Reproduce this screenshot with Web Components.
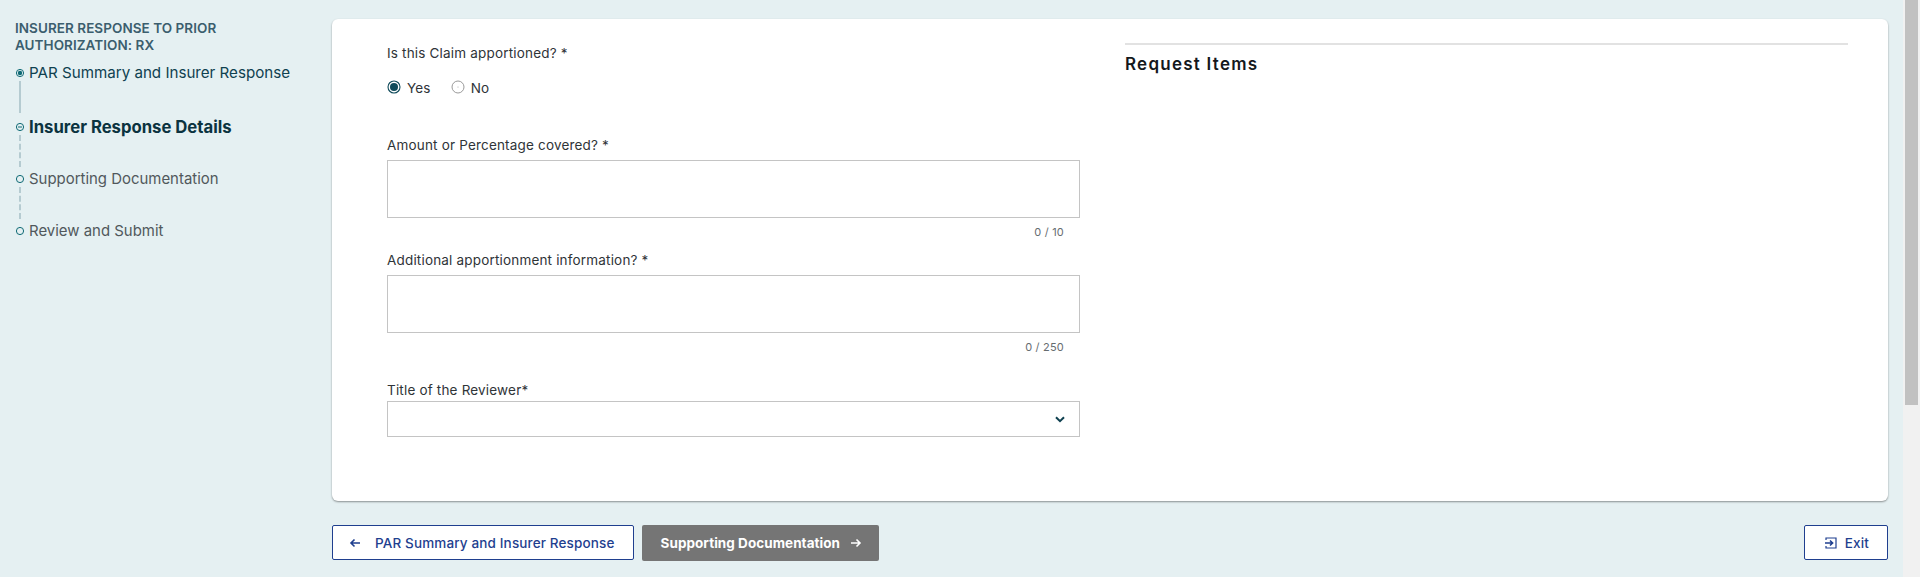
<!DOCTYPE html>
<html lang="en">
<head>
<meta charset="utf-8">
<title>Insurer Response Details</title>
<style>
    html, body { margin: 0; height: 577px; overflow: hidden; background: #e5f0f2; }
    body { font-family: "Inter", "Liberation Sans", sans-serif; }
</style>
</head>
<body>
<par-page>
    <step-nav slot="nav"></step-nav>
    <form-card slot="card"></form-card>
    <nav-actions slot="actions"></nav-actions>
</par-page>

<script>
// shared text style for field labels
const LABEL_CSS = `font: 400 13.5px/18px "Inter", "Liberation Sans", sans-serif; letter-spacing: .18px; color: #2f3438;`;

class ParPage extends HTMLElement {
    constructor() {
        super();
        this.attachShadow({ mode: 'open' });
        this.shadowRoot.innerHTML = `
            <style>
                :host { display: grid; grid-template-columns: 332px 1fr 17px; height: 577px; }
                .main { padding: 19px 15px 0 0; display: flex; flex-direction: column; gap: 24px; }
                .track { background: #f1f1f1; padding-left: 2px; }
                .thumb { height: 405px; background: #c1c1c1; margin-right: 2px; }
            </style>
            <div><slot name="nav"></slot></div>
            <div class="main">
                <slot name="card"></slot>
                <slot name="actions"></slot>
            </div>
            <div class="track"><div class="thumb"></div></div>
        `;
    }
}
customElements.define('par-page', ParPage);

class StepNav extends HTMLElement {
    constructor() {
        super();
        this.attachShadow({ mode: 'open' });
        this.steps = [
            { label: 'PAR Summary and Insurer Response', state: 'done' },
            { label: 'Insurer Response Details', state: 'current' },
            { label: 'Supporting Documentation', state: 'todo' },
            { label: 'Review and Submit', state: 'todo' }
        ];
    }

    connectedCallback() {
        this.shadowRoot.innerHTML = `
            <style>
                :host { display: block; padding: 20px 0 0 15px; font-family: "Inter", "Liberation Sans", sans-serif; }
                h2 { margin: 0 0 9px; font-size: 13.5px; line-height: 16.5px; font-weight: 600; letter-spacing: .05px; color: #3b5e6e; width: 262px; text-transform: uppercase; }
                ol { list-style: none; margin: 0; padding: 0; }
                li { display: flex; align-items: flex-start; gap: 4px; height: 52px; position: relative; font-size: 14.95px; line-height: 22px; color: #51585c; }
                li.done { color: #0f4150; font-size: 15.15px; height: 54px; }
                li.current { color: #0b3340; font-weight: 700; font-size: 16.7px; }
                svg { flex: none; margin-top: 6px; }
                li:not(:last-child)::after {
                    content: ""; position: absolute; left: 4px; top: 19px; height: 32px;
                    border-left: 2px dashed #b5cbd1;
                }
                li.done::after { border-left-style: solid !important; }
            </style>
            <h2>Insurer Response to Prior Authorization: RX</h2>
            <ol>
                ${this.steps.map(s => `
                    <li class="${s.state}">
                        <svg width="10" height="10" viewBox="0 0 10 10">
                            <circle cx="5" cy="5" r="3.6" fill="none" stroke="#0f6a75" stroke-width="1"/>
                            ${s.state === 'done' ? '<circle cx="5" cy="5" r="2.2" fill="#0f6a75"/>' : ''}
                            ${s.state === 'current' ? '<path d="M3 5h4" stroke="#0f6a75" stroke-width="1"/>' : ''}
                        </svg>
                        <span>${s.label}</span>
                    </li>
                `).join('')}
            </ol>
        `;
    }
}
customElements.define('step-nav', StepNav);

class TextField extends HTMLElement {
    constructor() {
        super();
        this.attachShadow({ mode: 'open' });
    }

    connectedCallback() {
        this.shadowRoot.innerHTML = `
            <style>
                :host { display: block; width: 693px; }
                label { display: block; ${LABEL_CSS} margin-bottom: 6px; }
                .box { height: 56px; border: 1px solid #c4c4c4; background: #fff; }
                .count { text-align: right; padding: 7px 16px 0 0; font: 400 11px/14px "Inter", "Liberation Sans", sans-serif; letter-spacing: .2px; color: #666c70; }
            </style>
            <label>${this.getAttribute('label')}</label>
            <div class="box"></div>
            <div class="count">${this.getAttribute('count')}</div>
        `;
    }
}
customElements.define('text-field', TextField);

class SelectField extends HTMLElement {
    constructor() {
        super();
        this.attachShadow({ mode: 'open' });
    }

    connectedCallback() {
        this.shadowRoot.innerHTML = `
            <style>
                :host { display: block; width: 693px; }
                label { display: block; ${LABEL_CSS} margin-bottom: 2px; }
                .box { height: 34px; border: 1px solid #c4c4c4; display: flex; align-items: center; justify-content: flex-end; padding-right: 14px; }
            </style>
            <label>${this.getAttribute('label')}</label>
            <div class="box">
                <svg width="10" height="7" viewBox="0 0 10 7"><path d="M1 1.2l4 4 4-4" fill="none" stroke="#0f4150" stroke-width="2"/></svg>
            </div>
        `;
    }
}
customElements.define('select-field', SelectField);

class RadioGroup extends HTMLElement {
    constructor() {
        super();
        this.attachShadow({ mode: 'open' });
    }

    connectedCallback() {
        this.shadowRoot.innerHTML = `
            <style>
                :host { display: block; }
                label { display: block; ${LABEL_CSS} }
                .opts { display: flex; gap: 20px; margin-top: 17px; ${LABEL_CSS} }
                .opt { display: flex; align-items: center; gap: 6px; }
                svg { flex: none; margin-top: -3px; }
            </style>
            <label>${this.getAttribute('label')}</label>
            <div class="opts">
                <span class="opt">
                    <svg width="14" height="14" viewBox="0 0 14 14"><circle cx="7" cy="7" r="6" fill="none" stroke="#0f4a5a" stroke-width="1.1"/><circle cx="7" cy="7" r="4" fill="#0f4a5a"/></svg>
                    Yes
                </span>
                <span class="opt">
                    <svg width="14" height="14" viewBox="0 0 14 14"><circle cx="7" cy="7" r="6" fill="#fff" stroke="#9a9a9a" stroke-width="1"/><circle cx="7" cy="7" r=".5" fill="#9a9a9a"/></svg>
                    No
                </span>
            </div>
        `;
    }
}
customElements.define('radio-group', RadioGroup);

class FormCard extends HTMLElement {
    constructor() {
        super();
        this.attachShadow({ mode: 'open' });
    }

    connectedCallback() {
        this.shadowRoot.innerHTML = `
            <style>
                :host {
                    display: grid; grid-template-columns: 693px 1fr; column-gap: 45px;
                    height: 482px; box-sizing: border-box; padding: 25px 40px 0 55px;
                    background: #fff; border-radius: 6px; box-shadow: 0 1px 2px rgba(0,0,0,.4);
                }
                .left { display: flex; flex-direction: column; }
                .right { margin-top: -1px; }
                h3 { margin: 0; border-top: 2px solid #e2e2e2; padding-top: 9px; font: 600 17px/20px "Inter", "Liberation Sans", sans-serif; letter-spacing: 1.25px; color: #14181c; }
            </style>
            <div class="left">
                <radio-group label="Is this Claim apportioned? *" style="margin-bottom: 39px"></radio-group>
                <text-field label="Amount or Percentage covered? *" count="0 / 10" style="margin-bottom: 12px"></text-field>
                <text-field label="Additional apportionment information? *" count="0 / 250" style="margin-bottom: 27px"></text-field>
                <select-field label="Title of the Reviewer*"></select-field>
            </div>
            <div class="right"><h3>Request Items</h3></div>
        `;
    }
}
customElements.define('form-card', FormCard);

class NavActions extends HTMLElement {
    constructor() {
        super();
        this.attachShadow({ mode: 'open' });
    }

    connectedCallback() {
        const arrow = d => `<svg width="12" height="10" viewBox="0 0 12 10"><path d="${d}" fill="none" stroke="currentColor" stroke-width="1.6"/></svg>`;
        this.shadowRoot.innerHTML = `
            <style>
                :host { display: flex; gap: 8px; align-items: flex-start; font: 500 13.5px/18px "Inter", "Liberation Sans", sans-serif; letter-spacing: .14px; }
                .btn { display: flex; align-items: center; box-sizing: border-box; height: 35px; border-radius: 2px; white-space: nowrap; }
                .outline { background: #fff; border: 1px solid #1f3f8f; color: #1f3f8f; }
                .back { padding: 0 18px 0 16px; gap: 14px; }
                .next { background: #757575; color: #fff; font-weight: 700; letter-spacing: .05px; height: 36px; padding: 0 17px 0 19px; gap: 10px; }
                .exit { margin-left: auto; padding: 0 18px 0 20px; gap: 8px; }
            </style>
            <div class="btn outline back">${arrow('M11 5H2M5.5 1.5L2 5l3.5 3.5')}PAR Summary and Insurer Response</div>
            <div class="btn next">Supporting Documentation${arrow('M1 5h9M6.5 1.5L10 5 6.5 8.5')}</div>
            <div class="btn outline exit">
                <svg width="12" height="12" viewBox="0 0 12 12"><path d="M1 3V1h10v10H1V9" fill="none" stroke="currentColor" stroke-width="1.2"/><path d="M0 6h7M5 3.5L7.6 6 5 8.5" fill="none" stroke="currentColor" stroke-width="1.6"/></svg>
                Exit
            </div>
        `;
    }
}
customElements.define('nav-actions', NavActions);
</script>
</body>
</html>
